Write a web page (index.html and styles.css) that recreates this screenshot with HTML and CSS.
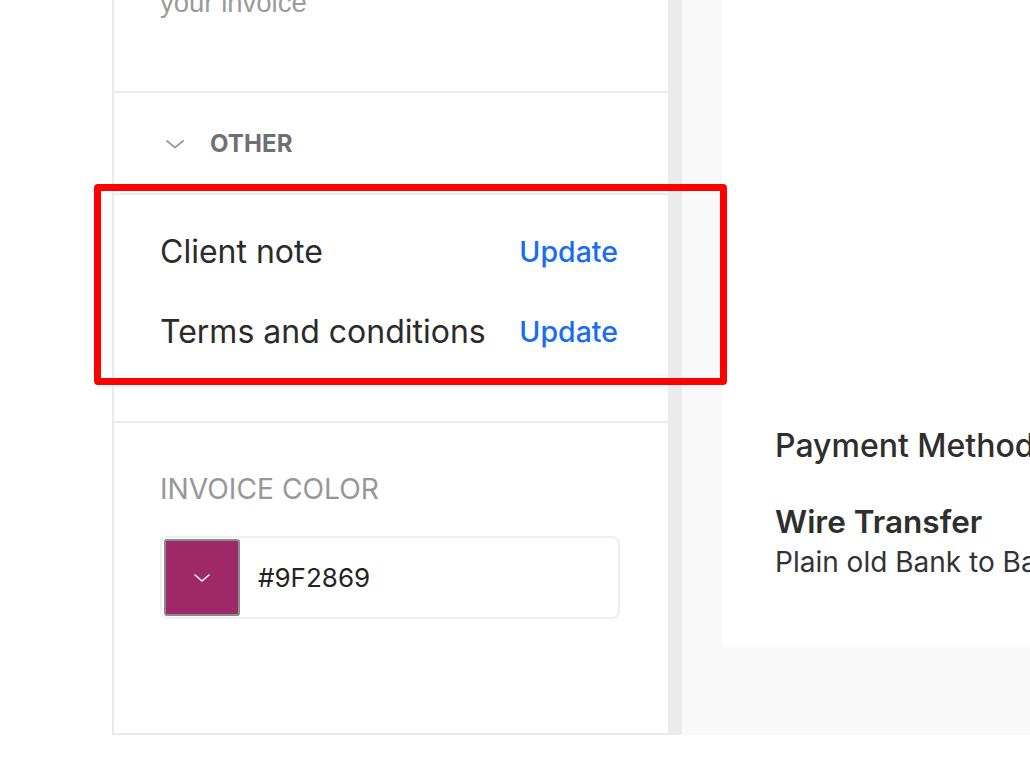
FILE: index.html
```html
<!DOCTYPE html>
<html lang="en">
<head>
<meta charset="utf-8">
<title>Invoice editor</title>
<link rel="stylesheet" href="styles.css">
</head>
<body>
<div class="page">
  <aside class="sidebar">
    <section class="sec sec-intro">
      <p class="intro-text">your invoice</p>
    </section>
    <section class="sec sec-head">
      <svg class="chev" width="20" height="10" viewBox="0 0 20 10"><path d="M2 2 L10 8.5 L18 2" fill="none" stroke="#9a9da2" stroke-width="2" stroke-linecap="round" stroke-linejoin="round"/></svg>
      <span class="head-title">OTHER</span>
    </section>
    <section class="sec sec-other">
      <div class="row"><span class="row-label">Client note</span><a class="row-link">Update</a></div>
      <div class="row"><span class="row-label">Terms and conditions</span><a class="row-link">Update</a></div>
    </section>
    <section class="sec sec-color">
      <div class="color-label">INVOICE COLOR</div>
      <div class="color-input">
        <div class="swatch">
          <svg width="16" height="8" viewBox="0 0 16 8"><path d="M1 1 L8 7 L15 1" fill="none" stroke="#ffffff" stroke-width="1.5" stroke-linecap="round" stroke-linejoin="round"/></svg>
        </div>
        <span class="color-value">#9F2869</span>
      </div>
    </section>
  </aside>
  <div class="gutter"></div>
  <main class="preview">
    <div class="card">
      <div class="pm-title">Payment Method</div>
      <div class="pm-name">Wire Transfer</div>
      <div class="pm-desc">Plain old Bank to Bank transfer</div>
    </div>
  </main>
  <div class="annot"></div>
</div>
</body>
</html>
```

FILE: styles.css
```css
* { box-sizing: border-box; }
html, body { margin: 0; padding: 0; background: #ffffff; }
body { font-family: Inter, "Noto Sans", sans-serif; color: #2b2b2b; overflow: hidden; }

.page {
  position: relative;
  display: flex;
  height: 735px;
  width: 1030px;
  overflow: hidden;
}

.sidebar {
  margin-left: 112px;
  width: 556px;
  flex: none;
  border-left: 2px solid #e7eaf0;
  border-bottom: 2px solid #e7eaf0;
  display: flex;
  flex-direction: column;
  background: #fff;
}

.sec { border-bottom: 2px solid #e9ecf1; }
.sec-intro { height: 93px; padding-left: 46px; overflow: hidden; }
.intro-text {
  margin: -12px 0 0;
  font-family: "Liberation Sans", Arial, sans-serif;
  font-size: 27.5px;
  line-height: 30px;
  color: #9b9b9b;
}

.sec-head {
  height: 102px;
  display: flex;
  align-items: center;
  padding-left: 51px;
  gap: 25px;
}
.chev { display: block; margin-top: 2px; }
.head-title {
  font-size: 24px;
  font-weight: 700;
  color: #6d7075;
  letter-spacing: 0.1px;
}

.sec-other {
  height: 228px;
  padding: 32px 50px 0 46px;
  display: flex;
  flex-direction: column;
  gap: 32px;
}
.row { display: flex; justify-content: space-between; align-items: center; height: 48px; }
.row-label { font-size: 32px; color: #2b2b2b; }
.row-link { font-size: 28.5px; font-weight: 500; color: #1a6cf4; }

.sec-color {
  flex: 1;
  border-bottom: none;
  padding: 50px 48px 0 46px;
}
.color-label {
  font-size: 28.2px;
  color: #979797;
  line-height: 32px;
}
.color-input {
  margin-top: 31px;
  width: 460px;
  height: 83px;
  border: 2px solid #efefef;
  border-radius: 8px;
  display: flex;
  align-items: center;
  padding: 2px;
}
.swatch {
  width: 76px;
  height: 77px;
  background: #9f2869;
  border: 2px solid #8b8b8b;
  border-radius: 3px;
  display: flex;
  align-items: center;
  justify-content: center;
}
.color-value {
  margin-left: 18px;
  font-size: 26px;
  color: #232323;
}

.gutter { width: 14px; flex: none; background: #ebebeb; }

.preview {
  flex: 1;
  background: #f9f9f9;
  padding-left: 40px;
  min-width: 0;
}
.card {
  background: #ffffff;
  height: 647px;
  padding: 426px 0 0 53px;
  white-space: nowrap;
}
.pm-title { font-size: 32px; font-weight: 500; color: #2e2e2e; line-height: 40px; }
.pm-name { margin-top: 35px; font-size: 31.5px; font-weight: 600; color: #2e2e2e; line-height: 42px; }
.pm-desc { font-size: 28px; color: #333; line-height: 38px; }

.annot {
  position: absolute;
  left: 94px;
  top: 184px;
  width: 633px;
  height: 201px;
  border: 7px solid #ff0000;
  border-radius: 4px;
  pointer-events: none;
}
```
